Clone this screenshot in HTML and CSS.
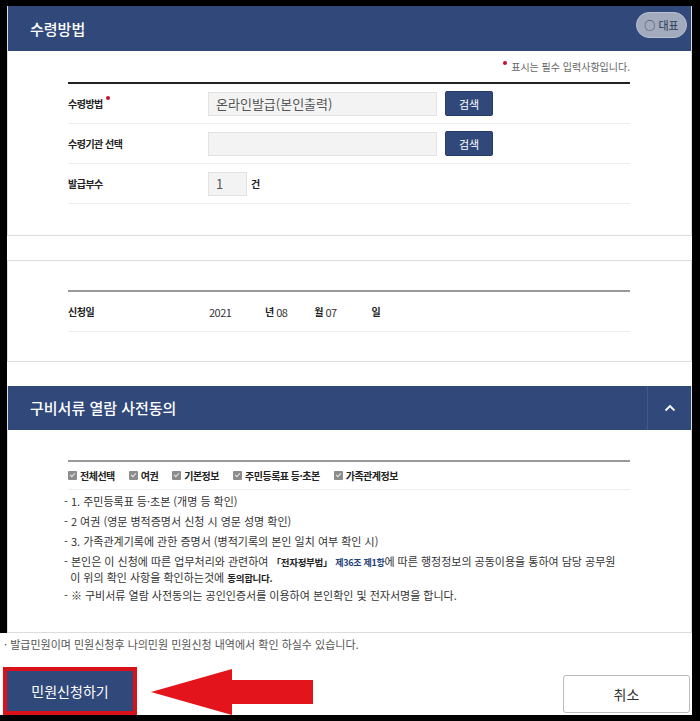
FILE: index.html
```html
<!DOCTYPE html>
<html lang="ko">
<head>
  <meta charset="UTF-8">
  <title>수령방법</title>
  <link rel="stylesheet" href="styles.css">
</head>
<body>

  <div class="screen">

    <div class="card card-first">
      <div class="card-head">
        <h3>수령방법</h3>
        <span class="pill">○ 대표</span>
      </div>
      <div class="card-body">
        <p class="req-note"><span class="dot"></span>표시는 필수 입력사항입니다.</p>
        <div class="table">
          <div class="row">
            <div class="label">수령방법<span class="dot dot-label"></span></div>
            <div class="field">
              <input type="text" class="inp" value="온라인발급(본인출력)" readonly>
              <button type="button" class="btn-search">검색</button>
            </div>
          </div>
          <div class="row">
            <div class="label">수령기관 선택</div>
            <div class="field">
              <input type="text" class="inp" readonly>
              <button type="button" class="btn-search">검색</button>
            </div>
          </div>
          <div class="row">
            <div class="label">발급부수</div>
            <div class="field">
              <input type="text" class="inp inp-small" value="1" readonly>
              <span class="unit">건</span>
            </div>
          </div>
        </div>
      </div>
    </div>

    <div class="card card-date">
      <div class="card-body">
        <div class="table table-grey">
          <div class="row">
            <div class="label">신청일</div>
            <div class="field date">
              <span class="num num-year">2021</span>
              <span class="unit">년</span>
              <span class="num num-month">08</span>
              <span class="unit">월</span>
              <span class="num num-day">07</span>
              <span class="unit">일</span>
            </div>
          </div>
        </div>
      </div>
    </div>

    <div class="card card-agree">
      <div class="card-head card-head-small">
        <h3>구비서류 열람 사전동의</h3>
        <span class="toggle">
          <svg width="12" height="8" viewBox="0 0 12 8"><path d="M1.5 6.5 L6 2 L10.5 6.5" fill="none" stroke="#fff" stroke-width="1.8"/></svg>
        </span>
      </div>
      <div class="card-body">
        <div class="table table-grey">
          <div class="checks">
            <label class="chk"><span class="cb"></span>전체선택</label>
            <label class="chk"><span class="cb"></span>여권</label>
            <label class="chk"><span class="cb"></span>기본정보</label>
            <label class="chk"><span class="cb"></span>주민등록표 등·초본</label>
            <label class="chk"><span class="cb"></span>가족관계정보</label>
          </div>
        </div>
        <ul class="agree-list">
          <li>- 1. 주민등록표 등·초본 (개명 등 확인)</li>
          <li>- 2 여권 (영문 병적증명서 신청 시 영문 성명 확인)</li>
          <li>- 3. 가족관계기록에 관한 증명서 (병적기록의 본인 일치 여부 확인 시)</li>
          <li class="long">- 본인은 이 신청에 따른 업무처리와 관련하여 <b>「전자정부법」</b> <b class="law">제36조 제1항</b>에 따른 행정정보의 공동이용을 통하여 담당 공무원<br>&nbsp; 이 위의 확인 사항을 확인하는것에 <b>동의합니다.</b></li>
          <li>- ※ 구비서류 열람 사전동의는 공인인증서를 이용하여 본인확인 및 전자서명을 합니다.</li>
        </ul>
      </div>
    </div>

    <p class="foot-note">· 발급민원이며 민원신청후 나의민원 민원신청 내역에서 확인 하실수 있습니다.</p>

    <div class="actions">
      <button type="button" class="btn-apply">민원신청하기</button>
      <svg class="arrow" width="162" height="46" viewBox="0 0 162 46">
        <polygon points="0,23 81,0 81,11 162,11 162,35 81,35 81,46" fill="#e3141b"/>
      </svg>
      <button type="button" class="btn-cancel">취소</button>
    </div>

  </div>

</body>
</html>
```

FILE: styles.css
```css
* {
  box-sizing: border-box;
}
body {
  margin: 0;
  background: #000;
  font-family: "Noto Sans CJK KR", "Noto Sans", sans-serif;
  color: #333;
}
.screen {
  margin: 6px 8px 6px 7px;
  height: 709px;
  background: #fff;
  display: flex;
  flex-direction: column;
}
.card {
  border: 1px solid #dcdcdc;
  border-top: none;
}
.card-head {
  height: 45px;
  background: #30497a;
  display: flex;
  justify-content: space-between;
  align-items: flex-start;
}
.card-head h3 {
  margin: 0;
  padding-left: 22px;
  line-height: 45px;
  font-size: 15px;
  font-weight: 500;
  color: #fff;
}
.card-head-small {
  height: 44px;
  align-items: stretch;
}
.card-head-small h3 {
  line-height: 44px;
}
.pill {
  margin: 6px 4px 0 0;
  width: 51px;
  height: 26px;
  border-radius: 13px;
  background: #a2abbd;
  border: 1px solid #b8c0cf;
  color: #2b3957;
  font-size: 11px;
  line-height: 24px;
  text-align: center;
}
.toggle {
  width: 44px;
  border-left: 1px solid #42598a;
  display: flex;
  align-items: center;
  justify-content: center;
}
.card-body {
  padding: 8px 61px 31px 60px;
}
.req-note {
  margin: 0 0 7px;
  text-align: right;
  font-size: 10px;
  line-height: 16px;
  color: #666;
}
.dot {
  display: inline-block;
  width: 4px;
  height: 4px;
  border-radius: 50%;
  background: #c8102e;
  margin-right: 4px;
  vertical-align: 6px;
}
.dot-label {
  margin: 0 0 0 3px;
  vertical-align: 8px;
}
.table {
  border-top: 2px solid #222;
}
.table-grey {
  border-top-color: #999;
}
.row {
  height: 40px;
  border-bottom: 1px solid #eee;
  display: flex;
  align-items: center;
}
.label {
  width: 140px;
  font-size: 10px;
  font-weight: bold;
  color: #222;
  letter-spacing: -0.5px;
}
.field {
  display: flex;
  align-items: center;
}
.inp {
  width: 229px;
  height: 24px;
  border: 1px solid #e3e3e3;
  background: #f3f3f3;
  padding: 0 7px;
  font-family: inherit;
  font-size: 13px;
  color: #555;
}
.inp-small {
  width: 39px;
}
.btn-search {
  margin-left: 8px;
  width: 48px;
  height: 25px;
  border: 1px solid #263d68;
  border-radius: 2px;
  background: #30497a;
  color: #fff;
  font-family: inherit;
  font-size: 11px;
}
.unit {
  margin-left: 4px;
  font-size: 10px;
  font-weight: bold;
  color: #222;
}
.date .num {
  font-size: 11px;
  color: #333;
  letter-spacing: -0.5px;
}
.date .unit {
  margin: 0 2px 0 0;
}
.num-year {
  width: 57px;
  padding-left: 1px;
}
.num-month {
  width: 38px;
}
.num-day {
  width: 46px;
}
.card-date {
  margin-top: 24px;
  border-top: 1px solid #dcdcdc;
}
.card-date .card-body {
  padding-top: 29px;
  padding-bottom: 29px;
}
.card-agree {
  margin-top: 24px;
}
.card-agree .card-body {
  padding-top: 30px;
  padding-bottom: 29px;
}
.checks {
  height: 28px;
  border-bottom: 1px solid #eee;
  display: flex;
  align-items: center;
  gap: 14px;
}
.chk {
  display: flex;
  align-items: center;
  font-size: 10px;
  font-weight: bold;
  color: #222;
  letter-spacing: -0.5px;
}
.cb {
  position: relative;
  width: 9px;
  height: 9px;
  margin-right: 3px;
  border-radius: 1px;
  background: #8c8c8c;
}
.cb::after {
  content: "";
  position: absolute;
  left: 3px;
  top: 1px;
  width: 2px;
  height: 4px;
  border: solid #e8e8e8;
  border-width: 0 1px 1px 0;
  transform: rotate(45deg);
}
.agree-list {
  list-style: none;
  margin: 3px 0 0 -4px;
  padding: 0;
  font-size: 11px;
  line-height: 16px;
  color: #333;
  white-space: nowrap;
}
.agree-list li {
  margin-bottom: 4px;
}
.agree-list li.long {
  margin-bottom: 2px;
}
.agree-list li:last-child {
  margin-bottom: 0;
}
.agree-list b {
  font-size: 9.5px;
  line-height: 1;
  color: #222;
  letter-spacing: -0.3px;
}
.agree-list .law {
  font-size: 9px;
  color: #1f3f7a;
}
.foot-note {
  margin: 0 0 0 -7px;
  padding: 4px 0 0 4px;
  background: #fff;
  font-size: 11px;
  line-height: 14px;
  color: #555;
}
.actions {
  margin: 0 2px 0 -7px;
  padding: 12px 0 0 3px;
  background: #fff;
  display: flex;
  align-items: flex-end;
  flex: 1;
}
.btn-apply {
  width: 134px;
  height: 48px;
  border: 4px solid #d9121a;
  background: #30497a;
  color: #fff;
  font-family: inherit;
  font-size: 14px;
}
.arrow {
  margin-left: 14px;
  display: block;
}
.btn-cancel {
  margin: 0 0 2px auto;
  width: 127px;
  height: 38px;
  border: 1px solid #bbb;
  border-radius: 3px;
  background: #fff;
  color: #333;
  font-family: inherit;
  font-size: 14px;
}
```
